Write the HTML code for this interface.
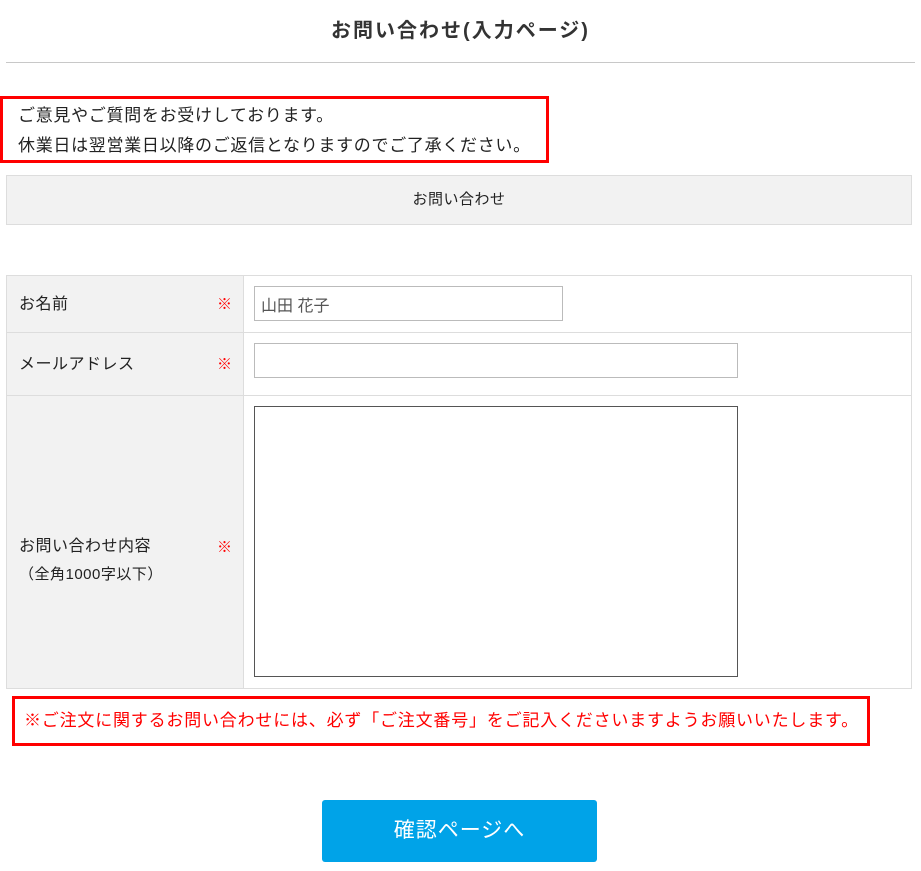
<!DOCTYPE html>
<html><head><meta charset="utf-8"><style>
*{box-sizing:border-box;margin:0;padding:0}
body{width:921px;height:871px;background:#fff;font-family:"Liberation Sans","Noto Sans CJK JP",sans-serif;color:#222;position:relative;overflow:hidden}
.abs{position:absolute}
h1{position:absolute;left:0;width:921px;top:16px;text-align:center;font-size:20px;font-weight:bold;letter-spacing:2px;color:#333;line-height:30px}
.hr{left:6px;width:909px;top:62px;height:1px;background:#c8c8c8}
.box1{left:0;top:96px;width:549px;height:67px;border:3px solid #f00;font-size:17px;letter-spacing:0.7px;line-height:30px;padding:2px 0 0 15px}
.bar{left:6px;top:175px;width:906px;height:50px;background:#f2f2f2;border:1px solid #ddd;text-align:center;font-size:15px;line-height:47px;letter-spacing:0.5px}
.tbl{left:6px;top:275px;width:906px;height:414px;border:1px solid #ddd}
.lab{position:absolute;left:0;width:237px;background:#f2f2f2;border-right:1px solid #ddd}
.row{position:absolute;left:0;width:904px;border-bottom:1px solid #ddd}
.lt{position:absolute;left:12px;font-size:16px;letter-spacing:0.5px}
.req{position:absolute;left:210px;color:#f00;font-size:15px}
.inp{position:absolute;border:1px solid #bbb;background:#fff}
.notice{left:12px;top:696px;width:858px;height:50px;border:3px solid #f00;color:#f00;font-size:17px;letter-spacing:0.8px;line-height:44px;padding-left:9px;white-space:nowrap}
.btn{left:322px;top:800px;width:275px;height:62px;background:#00a3e8;border-radius:3px;color:#fff;font-size:21px;text-align:center;line-height:62px;letter-spacing:1px}
</style></head><body>
<h1>お問い合わせ(入力ページ)</h1>
<div class="abs hr"></div>
<div class="abs box1">ご意見やご質問をお受けしております。<br>休業日は翌営業日以降のご返信となりますのでご了承ください。</div>
<div class="abs bar">お問い合わせ</div>
<div class="abs tbl">
 <div class="row" style="top:0;height:57px"><div class="lab" style="top:0;height:56px"></div></div>
 <div class="row" style="top:57px;height:63px"><div class="lab" style="top:0;height:62px"></div></div>
 <div class="lab" style="top:120px;height:292px"></div>
 <div class="lt" style="top:14px">お名前</div><div class="req" style="top:17px">※</div>
 <div class="lt" style="top:74px">メールアドレス</div><div class="req" style="top:77px">※</div>
 <div class="lt" style="top:257px;line-height:28px">お問い合わせ内容<br><span style="font-size:15px">（全角1000字以下）</span></div><div class="req" style="top:260px">※</div>
 <div class="inp" style="left:247px;top:10px;width:309px;height:35px;font-size:16px;color:#555;padding:5px 0 0 6px">山田 花子</div>
 <div class="inp" style="left:247px;top:67px;width:484px;height:35px"></div>
 <div class="inp" style="left:247px;top:130px;width:484px;height:271px;border-color:#555"></div>
</div>
<div class="abs notice">※ご注文に関するお問い合わせには、必ず「ご注文番号」をご記入くださいますようお願いいたします。</div>
<div class="abs btn">確認ページへ</div>
</body></html>
